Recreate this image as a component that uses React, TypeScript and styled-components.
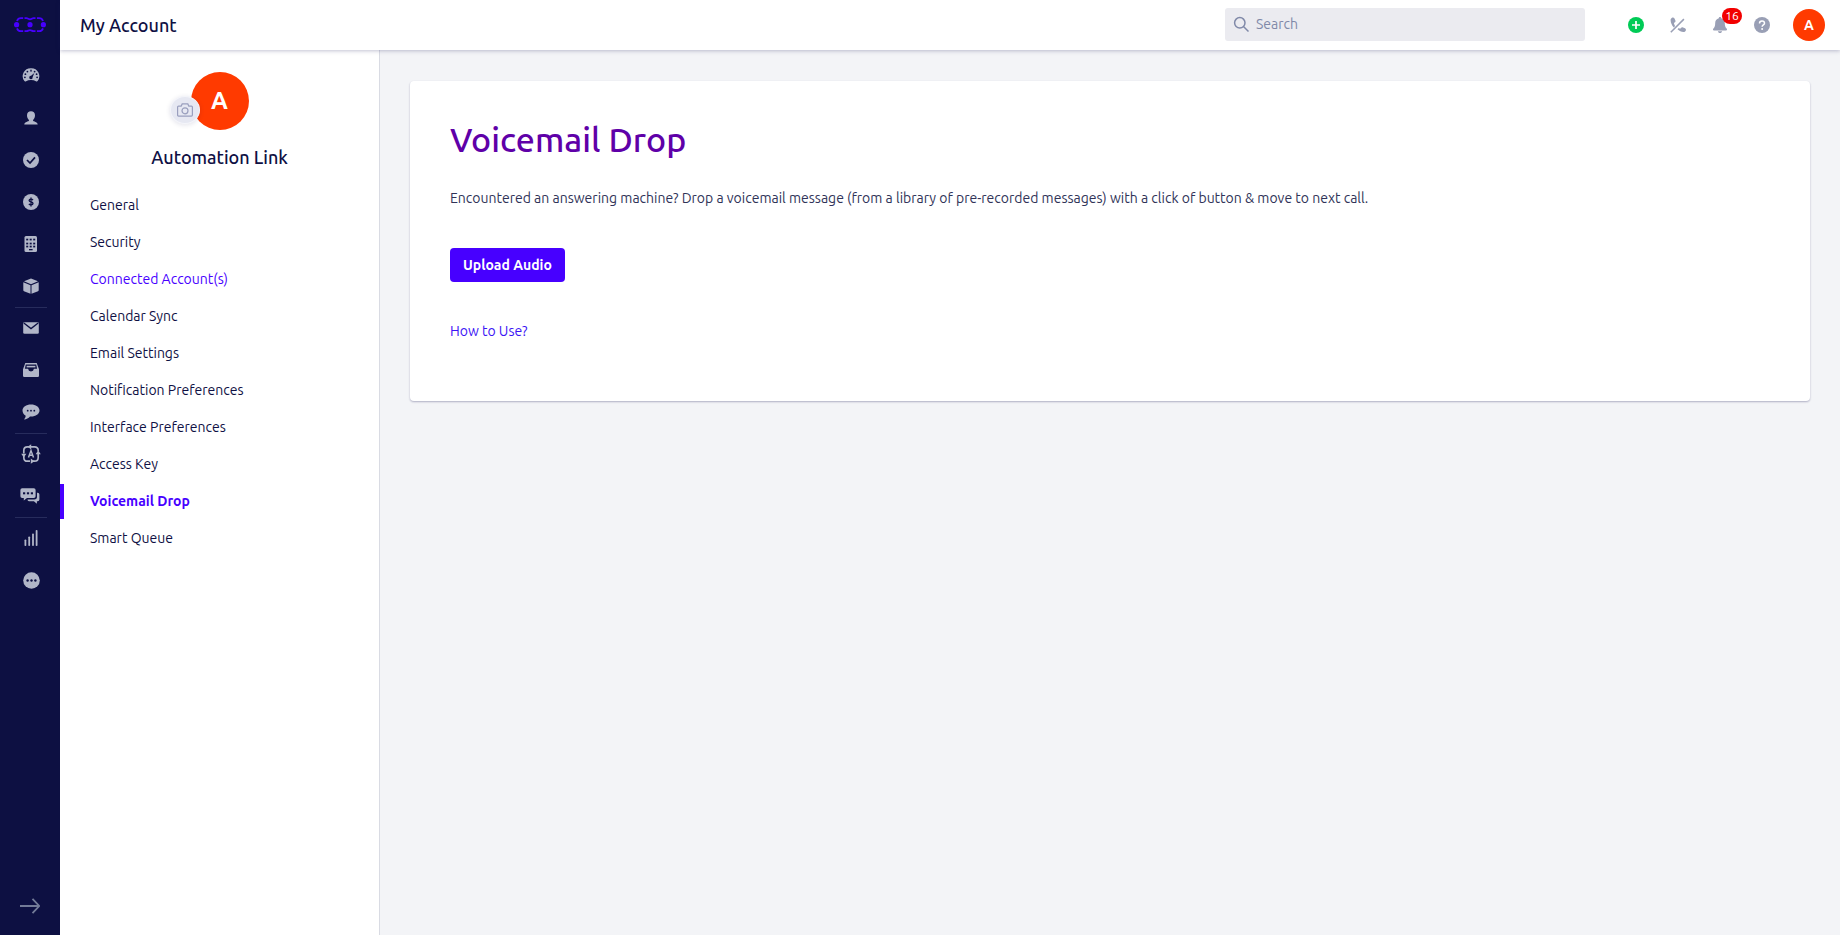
import React from 'react';
import styled, { createGlobalStyle } from 'styled-components';

const ink = '#0f1044';
const brand = '#4700ff';
const navy = '#0d1042';

const GlobalStyle = createGlobalStyle`
  *, *::before, *::after { box-sizing: border-box; }
  body {
    margin: 0;
    background: #f3f4f7;
    color: ${ink};
    font-family: Ubuntu, "Noto Sans", "Open Sans", sans-serif;
    font-size: 14px;
    line-height: 20px;
  }
  a { color: inherit; text-decoration: none; }
  button { font: inherit; border: 0; padding: 0; background: none; cursor: pointer; }
  h1, h2, p, ul { margin: 0; padding: 0; }
  ul { list-style: none; }
  svg { display: block; }
`;

const Shell = styled.div`
  display: flex;
  min-height: 100vh;
`;

const Rail = styled.nav`
  flex: none;
  display: flex;
  flex-direction: column;
  align-items: center;
  width: 60px;
  background: ${navy};
  color: #b1b6c8;
`;

const LogoLink = styled.a`
  display: flex;
  align-items: center;
  height: 50px;
  margin-bottom: 6px;
`;

const RailList = styled.ul`
  flex: 1;
  width: 60px;
  padding: 0 13px 0 15px;
`;

const RailItem = styled.li<{ $divided?: boolean }>`
  height: 42px;
  border-bottom: 1px solid ${p => (p.$divided ? '#272c5c' : 'transparent')};
`;

const RailLink = styled.a`
  display: flex;
  align-items: center;
  justify-content: center;
  height: 40px;
`;

const ExpandButton = styled.button`
  display: flex;
  align-items: center;
  justify-content: center;
  width: 60px;
  height: 58px;
  color: #737b98;
`;

const Main = styled.div`
  flex: 1;
  min-width: 0;
  display: flex;
  flex-direction: column;
`;

const TopBar = styled.header`
  position: relative;
  z-index: 1;
  display: flex;
  align-items: center;
  height: 50px;
  padding: 0 15px 0 20px;
  background: #fff;
  box-shadow: 0 1px 4px rgba(18, 18, 80, 0.26);
`;

const PageTitle = styled.h1`
  flex: 1;
  font-size: 18px;
  line-height: 24px;
  font-weight: 500;
`;

const SearchBox = styled.label`
  display: flex;
  align-items: center;
  gap: 7px;
  width: 360px;
  height: 33px;
  margin: 0 38px 2px 0;
  padding: 0 8px;
  border-radius: 3px;
  background: #ebebf0;
  color: #8089a8;
`;

const SearchInput = styled.input`
  flex: 1;
  min-width: 0;
  padding: 0;
  border: 0;
  outline: 0;
  background: none;
  color: ${ink};
  font: inherit;
  &::placeholder { color: #8089a8; opacity: 1; }
`;

const Actions = styled.div`
  display: flex;
  align-items: center;
  gap: 16px;
`;

const IconButton = styled.button<{ $tone?: string }>`
  position: relative;
  display: flex;
  align-items: center;
  justify-content: center;
  width: 26px;
  height: 26px;
  color: ${p => p.$tone ?? '#999fb5'};
`;

const Badge = styled.span`
  position: absolute;
  top: -4px;
  left: 15px;
  width: 20px;
  height: 16px;
  border-radius: 8px;
  background: #f20000;
  color: #fff;
  font-size: 12px;
  line-height: 16px;
  text-align: center;
`;

const Avatar = styled.span<{ $size: number; $font: number }>`
  display: flex;
  align-items: center;
  justify-content: center;
  width: ${p => p.$size}px;
  height: ${p => p.$size}px;
  border-radius: 50%;
  background: #ff3a00;
  color: #fff;
  font-size: ${p => p.$font}px;
  font-weight: 700;
`;

const AccountButton = styled.button`
  margin-left: 2px;
`;

const Body = styled.div`
  flex: 1;
  display: flex;
`;

const SidePanel = styled.aside`
  flex: none;
  width: 320px;
  padding-top: 22px;
  background: #fff;
  border-right: 1px solid #d9dbe3;
`;

const Profile = styled.div`
  display: flex;
  flex-direction: column;
  align-items: center;
  gap: 15px;
  margin-bottom: 18px;
`;

const AvatarFrame = styled.div`
  position: relative;
`;

const CameraButton = styled.button`
  position: absolute;
  top: 24px;
  left: -21px;
  display: flex;
  align-items: center;
  justify-content: center;
  width: 30px;
  height: 28px;
  border: 1px solid #f4f5fa;
  border-radius: 50%;
  background: #e6e8f2;
  color: #9a9fbe;
  box-shadow: 0 1px 5px rgba(18, 18, 80, 0.12);
`;

const ProfileName = styled.h2`
  font-size: 18px;
  line-height: 24px;
  font-weight: 500;
`;

const MenuItem = styled.li`
  padding: 1px 0;
`;

const MenuLink = styled.a<{ $tone: 'plain' | 'linked' | 'active' }>`
  display: block;
  padding: 7px 26px 8px;
  border-left: 4px solid ${p => (p.$tone === 'active' ? brand : 'transparent')};
  color: ${p => (p.$tone === 'plain' ? ink : brand)};
  font-weight: ${p => (p.$tone === 'active' ? 600 : 400)};
`;

const Content = styled.main`
  flex: 1;
  min-width: 0;
  padding: 31px 30px;
`;

const Card = styled.section`
  display: flex;
  flex-direction: column;
  align-items: flex-start;
  padding: 35px 40px 60px;
  border-radius: 4px;
  background: #fff;
  box-shadow: 0 1px 2px rgba(18, 18, 80, 0.3);
`;

const CardTitle = styled.h2`
  margin-bottom: 26px;
  color: #5f00a8;
  font-size: 34px;
  line-height: 46px;
  font-weight: 500;
`;

const Lead = styled.p`
  margin-bottom: 40px;
  color: #303358;
`;

const PrimaryButton = styled.button`
  height: 34px;
  margin-bottom: 39px;
  padding: 0 13px;
  border-radius: 4px;
  background: ${brand};
  color: #fff;
  font-weight: 600;
`;

const HelpLink = styled.a`
  color: #3c14f5;
`;

const Svg = ({ w = 18, h = w, children }: { w?: number; h?: number; children: React.ReactNode }) => (
  <svg width={w} height={h} viewBox={`0 0 ${w} ${h}`} fill="currentColor" aria-hidden="true">
    {children}
  </svg>
);

const Logo = () => (
  <svg width="32" height="16" viewBox="0 0 32 16" fill="none" stroke={brand} strokeWidth="1.800" aria-hidden="true">
    <path d="M3 4C3.700 2 5 1.200 6.800 1.200H9.200M10.500 1.200h2c1.500 0 2 1.100 3.500 1.100s2-1.100 3.500-1.100h2M22.900 1.200h2.300c1.800 0 3.100.8 3.800 2.800" />
    <path d="M3 11.400c.7 2 2 2.800 3.800 2.800h2.400M10.500 14.200h2c1.500 0 2-1.100 3.500-1.100s2 1.100 3.500 1.100h2M22.900 14.200h2.300c1.800 0 3.100-.8 3.800-2.800" />
    <g fill={brand} stroke="none">
      <circle cx="2.600" cy="7.700" r="2.600" />
      <circle cx="16" cy="7.700" r="2.600" />
      <circle cx="29.400" cy="7.700" r="2.600" />
    </g>
  </svg>
);

const GaugeIcon = () => (
  <Svg w={18} h={16}>
    <path d="M9 .2a8 8 0 0 1 6.600 12.900q-.5.600-1.200.3Q9 10.800 3.600 13.400q-.7.300-1.200-.3A8 8 0 0 1 9 .2z" />
    <g fill={navy}>
      <rect x="8.300" y="1.700" width="1.400" height="1.900" />
      <circle cx="5.400" cy="3.600" r=".9" /><circle cx="12.600" cy="3.600" r=".9" />
      <circle cx="3.400" cy="6.200" r=".9" /><circle cx="14.600" cy="6.200" r=".9" />
      <circle cx="2.900" cy="9.300" r=".9" /><circle cx="15.100" cy="9.300" r=".9" />
      <path d="M12.300 4.900 10.600 9.200a1.700 1.700 0 1 1-1.500-1.400z" />
    </g>
  </Svg>
);

const PersonIcon = () => (
  <Svg w={16}>
    <path d="M8 1.300c2.400 0 4 1.500 4 4 0 2-.8 3.800-1.900 4.600v1.200c2 .8 4.600 1.300 4.600 3.500H1.300c0-2.200 2.600-2.700 4.600-3.500V9.900C4.800 9.100 4 7.300 4 5.300c0-2.500 1.600-4 4-4z" />
  </Svg>
);

const CheckIcon = () => (
  <Svg w={16}>
    <circle cx="8" cy="8" r="8" />
    <path d="m4 8 3 3 5-5.600" fill="none" stroke={navy} strokeWidth="1.700" />
  </Svg>
);

const DollarIcon = () => (
  <Svg w={16}>
    <circle cx="8" cy="8" r="8" />
    <path d="M10 6.100C9.500 5.400 8.900 5.200 8 5.200c-1.200 0-1.900.5-1.900 1.300 0 1.900 3.900.9 3.900 2.900 0 .9-.8 1.400-2 1.400-.9 0-1.700-.3-2.100-.9M8 3.600v8.800" fill="none" stroke={navy} strokeWidth="1.300" />
  </Svg>
);

const BuildingIcon = () => (
  <Svg w={14} h={16}>
    <rect x="0.500" width="12.500" height="16" rx="1.500" />
    <g fill={navy}>
      {[3, 7, 10].map(y => [2.200, 5.700, 9.200].map(x => <rect key={`${x}-${y}`} x={x} y={y - 0.300} width="2" height="1.700" />))}
      <rect x="5" y="13" width="3.600" height="1.300" />
    </g>
  </Svg>
);

const BoxIcon = () => (
  <Svg w={16}>
    <path d="M8 .4 15 3.300 8 6.200 1 3.300zM.3 4.300l7.200 2.900v8.500L1 13.200q-.7-.3-.7-1zM15.700 4.300 8.500 7.200v8.500l6.500-2.500q.7-.3.700-1z" />
  </Svg>
);

const MailIcon = () => (
  <Svg w={16} h={12}>
    <path d="M1.500.2h13q1.300 0 1.300 1.300v9q0 1.300-1.300 1.300h-13Q.2 11.800.2 10.500v-9Q.2.200 1.500.2z" />
    <path d="m.8 1 7.200 5.600L15.200 1" fill="none" stroke={navy} strokeWidth="1.300" />
  </Svg>
);

const TrayIcon = () => (
  <Svg w={16} h={14}>
    <path d="M2.300 0h11.400L16 6.200v6.600q0 1.200-1.200 1.200H1.200Q0 14 0 12.800V6.200z" />
    <path d="M2.800 1.500h10.400l.9 4.300h-3.200A3 3 0 0 1 8 8.500a3 3 0 0 1-2.900-2.700H1.900z" fill={navy} />
    <path d="M3.600 2.800h8.800v1.600H3.600z" />
  </Svg>
);

const ChatIcon = () => (
  <Svg w={18} h={16}>
    <path d="M9 .6c4.800 0 8.500 2.600 8.500 6s-3.700 6-8.500 6l-1-.1C6.500 14.300 4.500 15.300 2 15.400c1-.9 1.600-2.200 1.700-3.600C1.700 10.700.5 8.800.5 6.600c0-3.400 3.700-6 8.500-6z" />
    <g fill={navy}><circle cx="5.700" cy="6.700" r=".9" /><circle cx="9" cy="6.700" r=".9" /><circle cx="12.300" cy="6.700" r=".9" /></g>
  </Svg>
);

const AutomationIcon = () => (
  <Svg w={20}>
    <path d="M10 2.800h3.500q3.700 0 3.700 3.700v1M17.200 10v3.500q0 3.700-3.700 3.700H11.500M9 17.200H6.500q-3.700 0-3.700-3.700V12M2.800 9.500v-3q0-3.700 3.700-3.700h1.500" fill="none" stroke="currentColor" strokeWidth="1.700" />
    <path d="M10.200.2v5.200L6.600 2.800zM19.800 10.200h-5.200l2.600-3.600zM9.800 19.800v-5.200l3.600 2.600zM.2 9.800h5.200l-2.600 3.600z" />
    <path d="m7.500 13.400 2.500-6.800 2.500 6.800M8.400 11.300h3.200" fill="none" stroke="currentColor" strokeWidth="1.500" />
  </Svg>
);

const ChatsIcon = () => (
  <Svg w={22} h={16}>
    <path d="M2.200.2h11.600q1.800 0 1.800 1.800v6.200q0 1.800-1.800 1.800H7l-3.200 2.500V10H2.200Q.4 10 .4 8.200V2Q.4.200 2.200.2z" />
    <path d="M17 4.800h.7q1.700 0 1.700 1.700v5q0 1.700-1.700 1.700h-.8v2.500l-3-2.500H9q-1.500 0-1.500-1.800h6.800q2.700 0 2.700-2.600z" />
    <g fill={navy}><rect x="3" y="4.300" width="2.200" height="2" /><rect x="6.900" y="4.300" width="2.200" height="2" /><rect x="10.800" y="4.300" width="2.200" height="2" /></g>
  </Svg>
);

const BarsIcon = () => (
  <Svg w={14} h={16}>
    <rect x="0.500" y="9.500" width="1.800" height="6.500" rx=".8" />
    <rect x="4.300" y="6.500" width="1.800" height="9.500" rx=".8" />
    <rect x="8.100" y="3.500" width="1.800" height="12.500" rx=".8" />
    <rect x="11.700" y="0" width="1.800" height="16" rx=".8" />
  </Svg>
);

const MoreIcon = () => (
  <Svg w={17}>
    <circle cx="8.500" cy="8.500" r="8.300" />
    <g fill={navy}><circle cx="4.600" cy="8.500" r="1.200" /><circle cx="8.500" cy="8.500" r="1.200" /><circle cx="12.400" cy="8.500" r="1.200" /></g>
  </Svg>
);

const ArrowIcon = () => (
  <svg width="20" height="16" viewBox="0 0 20 16" fill="none" stroke="currentColor" strokeWidth="1.800" aria-hidden="true">
    <path d="M0 8h19M12.500.8 19.200 8l-6.700 7.200" />
  </svg>
);

const SearchIcon = () => (
  <svg width="16" height="16" viewBox="0 0 16 16" fill="none" stroke="currentColor" strokeWidth="1.500" aria-hidden="true">
    <circle cx="6.800" cy="6.800" r="5.200" />
    <path d="m10.500 10.500 5 5" />
  </svg>
);

const PlusIcon = () => (
  <Svg w={16}>
    <circle cx="8" cy="8" r="8" />
    <path d="M8 4v8M4 8h8" stroke="#fff" strokeWidth="1.700" />
  </Svg>
);

const PhoneOffIcon = () => (
  <Svg w={16}>
    <path d="M2 .7C3 .1 4 .5 4.500 1.500l.9 2c.3.900 0 1.500-.8 2l-.7.600c.2 1.100.6 2 1.200 2.900L3.700 10.500C1.800 8.300.6 5.300.6 2.900.6 2 1.200 1.100 2 .7zM7.500 12.300l1.300-1.300c.500.300.900.500 1.400.7l.9-.9c.5-.6 1.100-.8 1.900-.4l2 .9c1 .5 1.200 1.500.7 2.400-.4.800-1.200 1.300-2.300 1.300-2 0-4.200-1.100-5.900-2.700z" />
    <path d="M.8 15.200 13.900 2.100" stroke="currentColor" strokeWidth="1.500" />
  </Svg>
);

const BellIcon = () => (
  <Svg w={16}>
    <path d="M8 0c.8 0 1.200.5 1.200 1.200 2.300.6 3.600 2.400 3.600 4.800 0 3 .6 4.500 2 5.800.5.6.2 1.700-.7 1.700H1.900c-.9 0-1.200-1.100-.7-1.700C2.600 10.500 3.200 9 3.200 6c0-2.400 1.300-4.200 3.600-4.800C6.800.5 7.200 0 8 0zM5.900 14.200h4.200C10 15.300 9 16 8 16s-2-.7-2.100-1.800z" />
  </Svg>
);

const HelpIcon = () => (
  <Svg w={16}>
    <circle cx="8" cy="8" r="8" />
    <path d="M5.500 6.400C5.500 4.800 6.600 4 8 4s2.500.8 2.500 2.200c0 1.700-2.400 1.700-2.400 3.500" fill="none" stroke="#fff" strokeWidth="1.500" />
    <circle cx="8.100" cy="11.900" r="1" fill="#fff" />
  </Svg>
);

const CameraIcon = () => (
  <svg width="16" height="14" viewBox="0 0 16 14" fill="none" stroke="currentColor" strokeWidth="1.200" aria-hidden="true">
    <path d="M1.600 3.100h2.600l1-2.200h5.600l1 2.200h2.600q1 0 1 1v8q0 1-1 1H1.600q-1 0-1-1v-8q0-1 1-1z" />
    <circle cx="8" cy="7.800" r="3" />
  </svg>
);

const railItems = [
  { label: 'Dashboard', icon: GaugeIcon },
  { label: 'Contacts', icon: PersonIcon },
  { label: 'Tasks', icon: CheckIcon },
  { label: 'Deals', icon: DollarIcon },
  { label: 'Companies', icon: BuildingIcon },
  { label: 'Products', icon: BoxIcon, divided: true },
  { label: 'Mail', icon: MailIcon },
  { label: 'Inbox', icon: TrayIcon },
  { label: 'Messages', icon: ChatIcon, divided: true },
  { label: 'Automation', icon: AutomationIcon },
  { label: 'Conversations', icon: ChatsIcon, divided: true },
  { label: 'Reports', icon: BarsIcon },
  { label: 'More', icon: MoreIcon },
];

const menu: { label: string; tone?: 'linked' | 'active' }[] = [
  { label: 'General' },
  { label: 'Security' },
  { label: 'Connected Account(s)', tone: 'linked' },
  { label: 'Calendar Sync' },
  { label: 'Email Settings' },
  { label: 'Notification Preferences' },
  { label: 'Interface Preferences' },
  { label: 'Access Key' },
  { label: 'Voicemail Drop', tone: 'active' },
  { label: 'Smart Queue' },
];

export default function App() {
  return (
    <>
      <GlobalStyle />
      <Shell>
        <Rail aria-label="Main">
          <LogoLink href="#home" aria-label="Home"><Logo /></LogoLink>
          <RailList>
            {railItems.map(({ label, icon: Icon, divided }) => (
              <RailItem key={label} $divided={divided}>
                <RailLink href="#" aria-label={label}><Icon /></RailLink>
              </RailItem>
            ))}
          </RailList>
          <ExpandButton aria-label="Expand menu"><ArrowIcon /></ExpandButton>
        </Rail>
        <Main>
          <TopBar>
            <PageTitle>My Account</PageTitle>
            <SearchBox>
              <SearchIcon />
              <SearchInput type="search" placeholder="Search" aria-label="Search" />
            </SearchBox>
            <Actions>
              <IconButton $tone="#00cb56" aria-label="Add"><PlusIcon /></IconButton>
              <IconButton aria-label="Calling off"><PhoneOffIcon /></IconButton>
              <IconButton aria-label="Notifications"><BellIcon /><Badge>16</Badge></IconButton>
              <IconButton aria-label="Help"><HelpIcon /></IconButton>
              <AccountButton aria-label="Account"><Avatar $size={32} $font={14}>A</Avatar></AccountButton>
            </Actions>
          </TopBar>
          <Body>
            <SidePanel>
              <Profile>
                <AvatarFrame>
                  <Avatar $size={58} $font={24}>A</Avatar>
                  <CameraButton aria-label="Change photo"><CameraIcon /></CameraButton>
                </AvatarFrame>
                <ProfileName>Automation Link</ProfileName>
              </Profile>
              <nav aria-label="Account settings">
                <ul>
                  {menu.map(({ label, tone = 'plain' }) => (
                    <MenuItem key={label}>
                      <MenuLink href="#" $tone={tone} aria-current={tone === 'active' ? 'page' : undefined}>{label}</MenuLink>
                    </MenuItem>
                  ))}
                </ul>
              </nav>
            </SidePanel>
            <Content>
              <Card>
                <CardTitle>Voicemail Drop</CardTitle>
                <Lead>
                  Encountered an answering machine? Drop a voicemail message (from a library of pre-recorded messages) with a click of button &amp; move to next call.
                </Lead>
                <PrimaryButton>Upload Audio</PrimaryButton>
                <HelpLink href="#">How to Use?</HelpLink>
              </Card>
            </Content>
          </Body>
        </Main>
      </Shell>
    </>
  );
}
